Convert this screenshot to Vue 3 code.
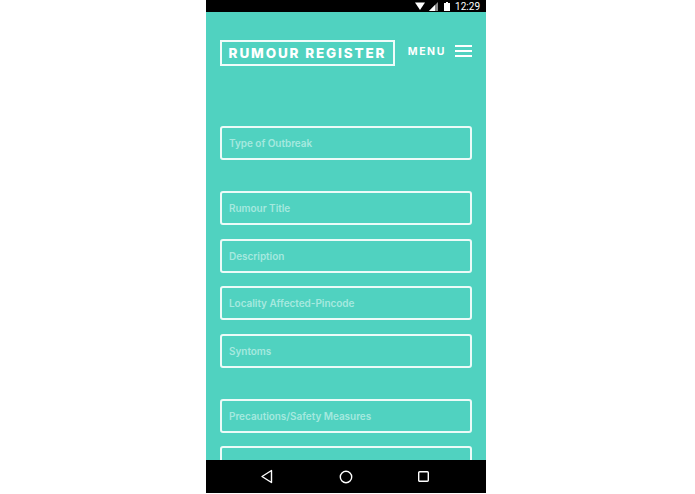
<script setup>
const groups = [
  ['Type of Outbreak'],
  ['Rumour Title', 'Description', 'Locality Affected-Pincode', 'Syntoms'],
  ['Precautions/Safety Measures', ''],
]
</script>

<template>
  <div class="page">
    <div class="phone">
      <div class="status">
        <svg class="wifi" width="10" height="8" viewBox="0 0 10 8"><path d="M0 0.5h10L5 8z" fill="#fff" /></svg>
        <svg class="signal" width="9" height="9" viewBox="0 0 9 9"><path d="M9 0v9H0z" fill="#8a8a8a" /><path d="M6 3v6H0z" fill="#fff" /></svg>
        <svg class="batt" width="6" height="9" viewBox="0 0 6 9"><path d="M0 1h6v8H0z" fill="#fff" /><path d="M2 0h2v1H2z" fill="#fff" /></svg>
        <span class="time">12:29</span>
      </div>
      <div class="content">
        <header class="head">
          <div class="logo">RUMOUR REGISTER</div>
          <div class="menu">
            <span>MENU</span>
            <div class="burger"><i></i><i></i><i></i></div>
          </div>
        </header>
        <form class="form">
          <div v-for="(g, i) in groups" :key="i" class="group">
            <div v-for="(f, j) in g" :key="j" class="field">{{ f }}</div>
          </div>
        </form>
      </div>
      <nav class="nav">
        <svg width="14" height="15" viewBox="0 0 14 15"><path d="M11.5 1.5v12L2 7.5z" fill="none" stroke="#fff" stroke-width="1.4" stroke-linejoin="round" /></svg>
        <svg width="14" height="14" viewBox="0 0 14 14"><circle cx="7" cy="7" r="5.7" fill="none" stroke="#fff" stroke-width="1.4" /></svg>
        <svg width="13" height="13" viewBox="0 0 13 13"><rect x="1.7" y="1.7" width="9.6" height="9.6" rx="1" fill="none" stroke="#fff" stroke-width="1.4" /></svg>
      </nav>
    </div>
  </div>
</template>

<style scoped>
.page { width: 695px; height: 494px; background: #fff; display: flex; padding-left: 206px; box-sizing: border-box; }
.phone { width: 280px; height: 493px; display: flex; flex-direction: column; overflow: hidden; font-family: Inter, "Liberation Sans", sans-serif; }
.status { height: 12px; flex: none; background: #000; display: flex; align-items: center; justify-content: flex-end; padding-right: 6px; color: #fff; }
.wifi { margin-right: 4px; }
.signal { margin-right: 6px; }
.batt { margin-right: 5px; }
.time { font: 400 10px Roboto, sans-serif; }
.content { flex: 1; min-height: 0; background: #50d2c0; padding: 28px 14px 0; overflow: hidden; }
.head { display: flex; justify-content: space-between; align-items: flex-start; }
.logo { height: 26px; width: 175px; box-sizing: border-box; border: 2px solid #f0fcfa; color: #fff; font-weight: 800; font-size: 13.5px; letter-spacing: 1.85px; display: flex; align-items: center; justify-content: center; white-space: nowrap; }
.menu { display: flex; align-items: center; gap: 9px; color: #fff; font-weight: 700; font-size: 10.5px; letter-spacing: 1.6px; padding-top: 5px; }
.burger { width: 17px; display: flex; flex-direction: column; gap: 3px; margin-top: -1px; }
.burger i { display: block; height: 2px; background: #fff; }
.form { margin-top: 60px; display: flex; flex-direction: column; gap: 31px; }
.group { display: flex; flex-direction: column; gap: 13.5px; }
.field { height: 34px; width: 252px; box-sizing: border-box; border: 2px solid #ecfbf8; border-radius: 3px; padding-left: 7px; display: flex; align-items: center; color: #a5e9df; font-weight: 600; font-size: 10px; letter-spacing: -0.04px; white-space: nowrap; }
.nav { height: 33px; flex: none; background: #000; display: flex; align-items: center; justify-content: space-between; padding: 0 56px 0 54px; }
</style>
